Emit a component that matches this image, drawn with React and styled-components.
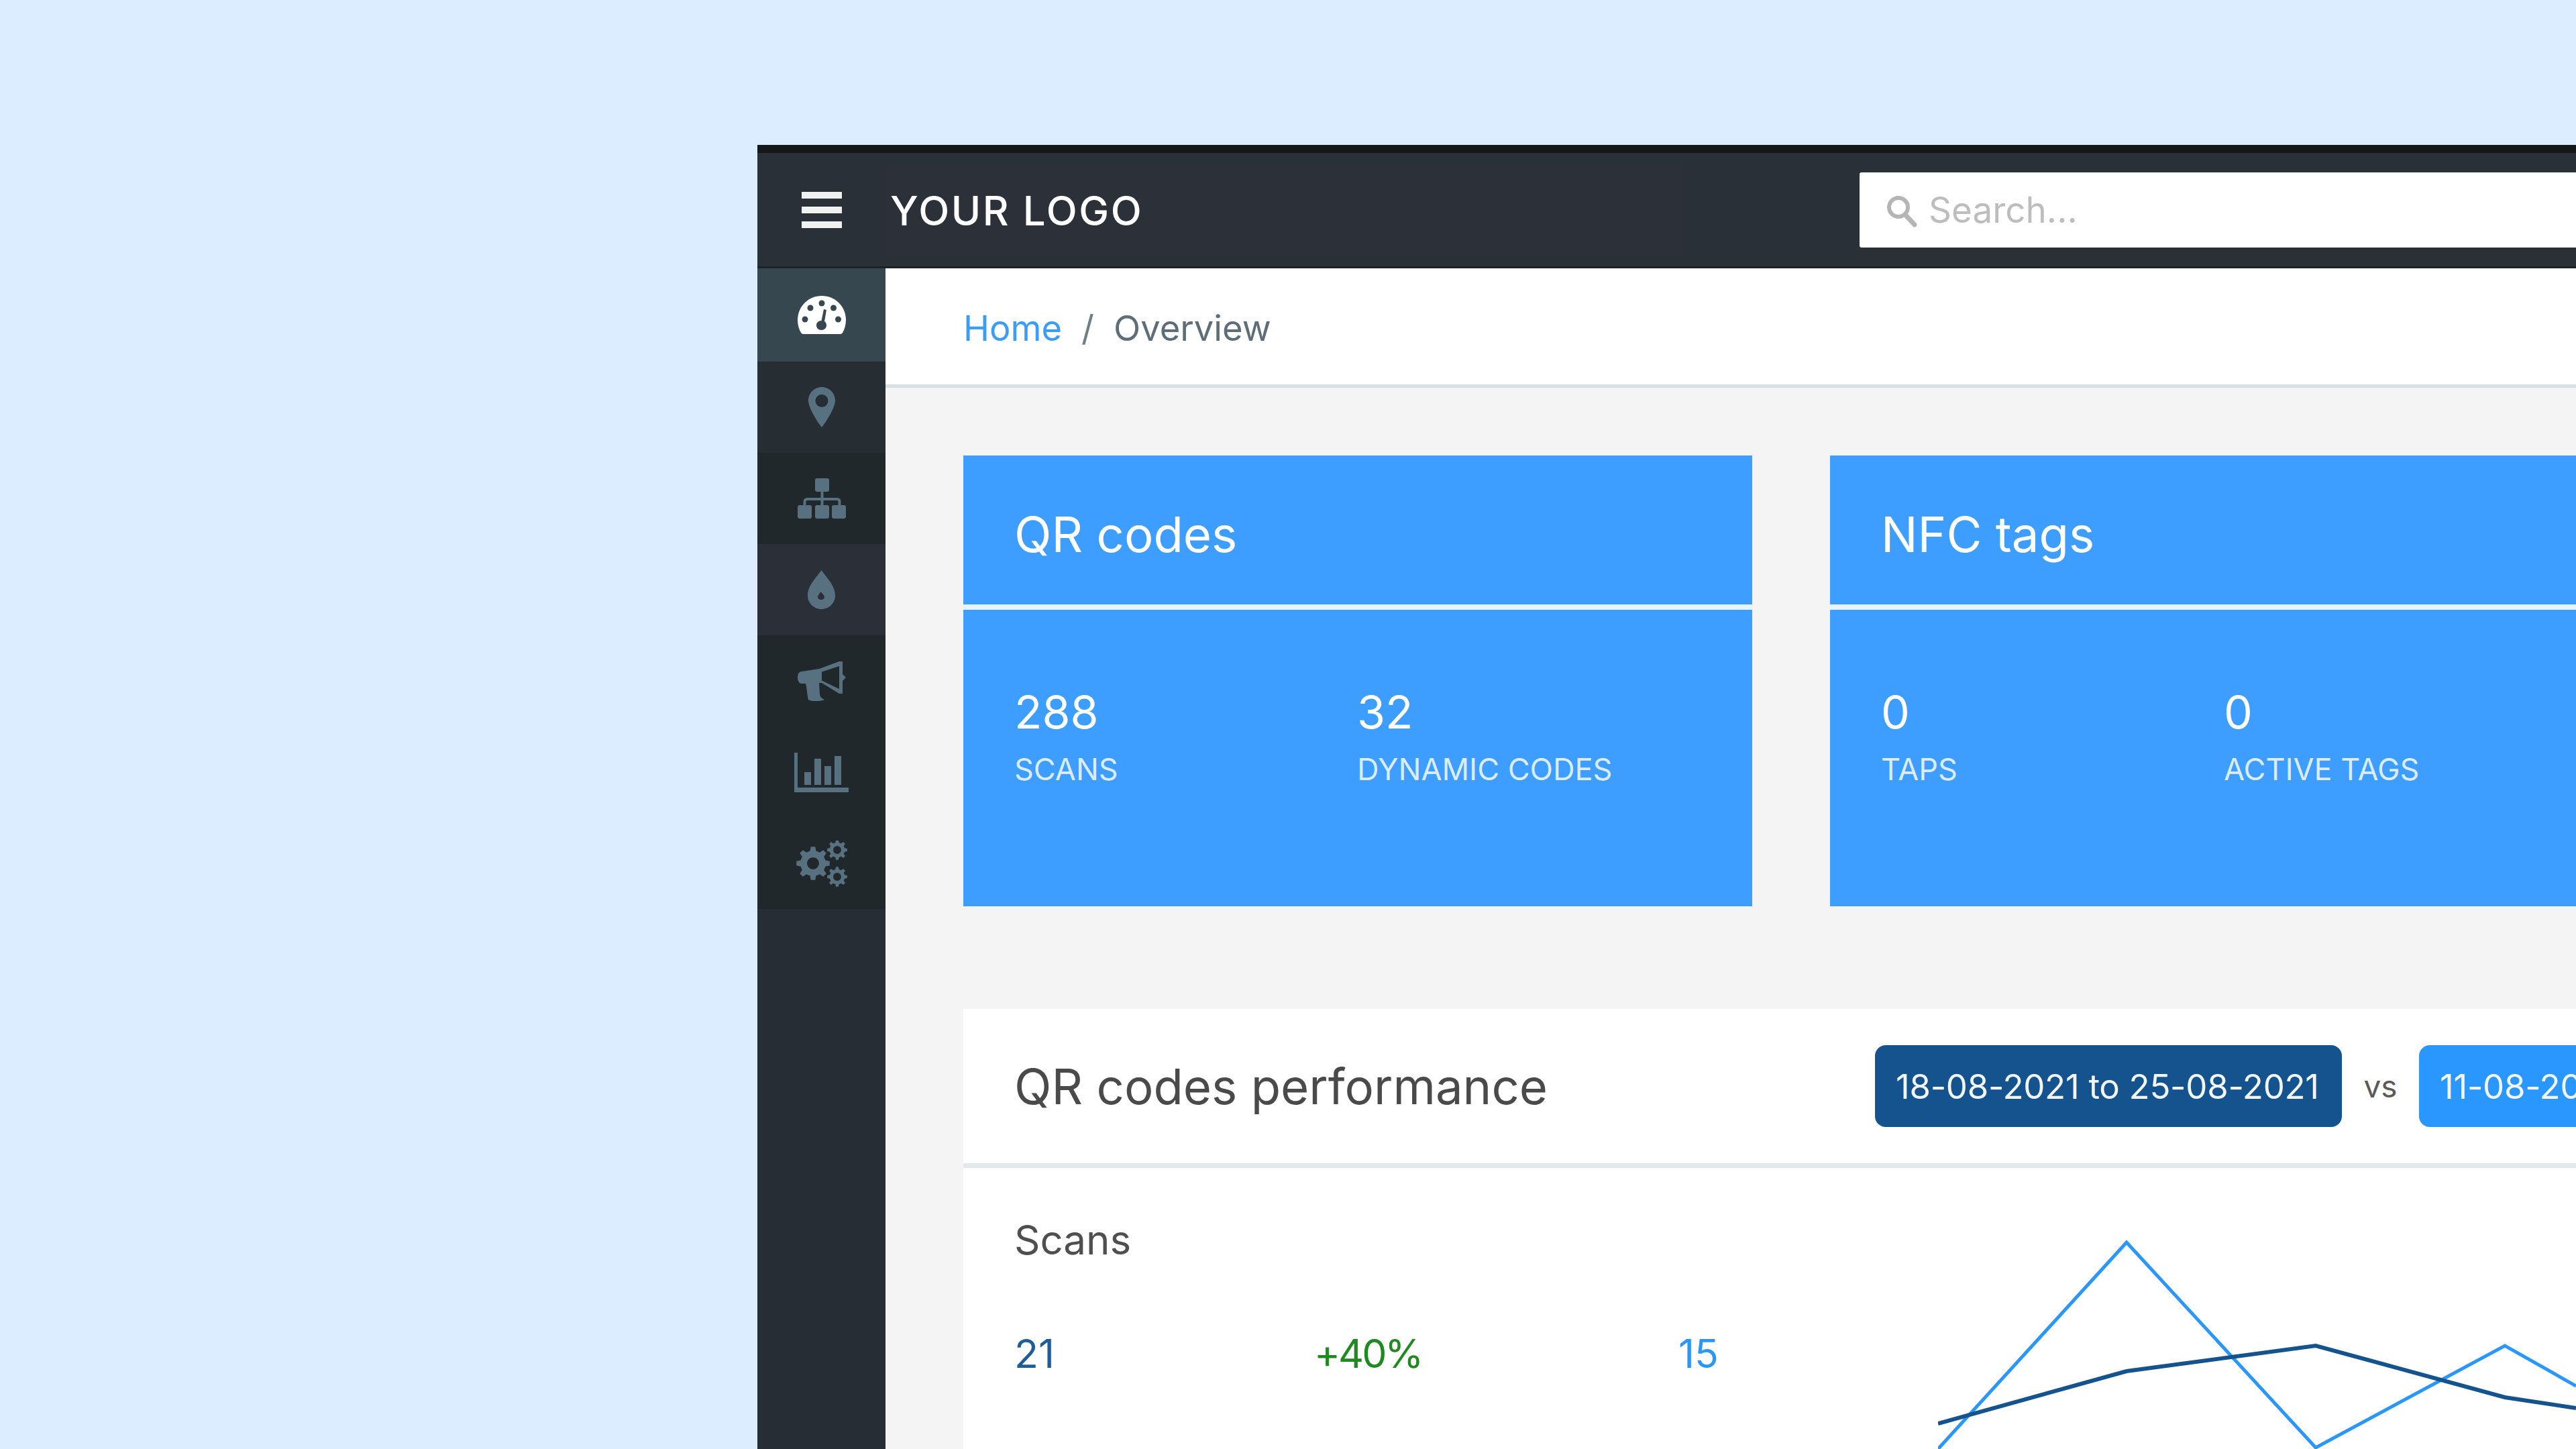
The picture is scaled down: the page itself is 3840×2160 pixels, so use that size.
import React from "react";
import styled, { createGlobalStyle } from "styled-components";

const Global = createGlobalStyle`
  html, body { margin: 0; padding: 0; width: 3840px; height: 2160px; overflow: hidden; background: #dbedff; }
  #root { width: 3840px; height: 2160px; overflow: hidden; }
  * { box-sizing: border-box; }
`;

const Stage = styled.div`
  width: 3840px;
  height: 2160px;
  padding: 216px 0 0 1129px;
  overflow: hidden;
  background: #dbedff;
  font-family: Inter, "Liberation Sans", sans-serif;
`;
const Window = styled.div`
  width: 2711px;
  height: 1944px;
  display: flex;
  flex-direction: column;
  background: #2a2f38;
  border-top: 12px solid #15181a;
  overflow: hidden;
`;
const Header = styled.header`
  height: 172px;
  flex: none;
  display: flex;
  align-items: center;
  background: #2a3038;
  border-bottom: 3px solid #1c2329;
`;
const Burger = styled.div`
  width: 191px;
  flex: none;
  display: flex;
  flex-direction: column;
  align-items: center;
  gap: 12px;
  span { display: block; width: 60px; height: 10px; background: #f0f1f1; }
`;
const LogoArea = styled.div`
  width: 1191px;
  flex: none;
  height: 134px;
  padding: 2px 0 0 7px;
  display: flex;
  align-items: center;
  background: #2c3039;
  color: #fff;
  font-size: 60px;
  font-weight: 500;
  letter-spacing: 2.6px;
`;
const SearchBox = styled.div`
  margin-left: 261px;
  flex: none;
  width: 1100px;
  height: 112px;
  background: #fff;
  border-radius: 3px 0 0 3px;
  display: flex;
  align-items: center;
  padding-left: 38px;
  gap: 15px;
  color: #bdbdbd;
  font-size: 53px;
  svg { flex: none; margin-top: 3px; }
`;
const Body = styled.div`
  flex: 1;
  display: flex;
  min-height: 0;
`;
const Sidebar = styled.nav`
  width: 191px;
  flex: none;
  background: #272d34;
`;
const toneColors = { active: "#37474f", mid: "#262e33", deep: "#20282b", soft: "#2a2f38" };
const NavItem = styled.div`
  height: ${p => (p.$tone === "active" ? 139 : 136)}px;
  display: flex;
  align-items: center;
  justify-content: center;
  color: ${p => (p.$tone === "active" ? "#fff" : "#577180")};
  background: ${p => toneColors[p.$tone]};
`;
const Main = styled.main`
  flex: 1;
  background: #f4f4f4;
  min-width: 0;
`;
const Crumbs = styled.div`
  height: 178px;
  padding: 5px 0 0 116px;
  display: flex;
  align-items: center;
  background: #fff;
  border-bottom: 5px solid #d6dfe4;
  font-size: 52.5px;
  color: #5e6e78;
`;
const CrumbLink = styled.span` color: #3a9dfb; `;
const Slash = styled.span` margin: 0 29px; color: #6f7f88; `;
const Content = styled.div`
  padding: 101px 0 0 116px;
`;
const Cards = styled.div`
  display: flex;
  gap: 116px;
`;
const StatCard = styled.section`
  width: 1176px;
  height: 672px;
  flex: none;
  background: #3d9eff;
  color: #fff;
`;
const StatHead = styled.h2`
  margin: 0;
  height: 230px;
  padding: 78px 0 0 76px;
  font-size: 72.5px;
  line-height: 80px;
  font-weight: 400;
  border-bottom: 8px solid #e8f3ff;
`;
const StatRow = styled.div`
  display: flex;
  padding: 114px 0 0 76px;
`;
const Stat = styled.div`
  width: 511px;
  font-size: 68px;
  line-height: 76px;
  font-weight: 400;
  small {
    display: block;
    margin-top: 22px;
    font-size: 45px;
    line-height: 52px;
    font-weight: 400;
    color: #dcecff;
  }
`;
const Perf = styled.section`
  margin-top: 153px;
  background: #fff;
  height: 800px;
`;
const PerfHead = styled.div`
  height: 237px;
  padding: 0 0 0 76px;
  display: flex;
  align-items: center;
  border-bottom: 7px solid #e3e8eb;
`;
const PerfTitle = styled.h3`
  margin: 0;
  width: 1283px;
  flex: none;
  font-size: 72.5px;
  font-weight: 400;
  color: #4a4a4a;
`;
const RangeBtn = styled.div`
  height: 122px;
  flex: none;
  width: 696px;
  padding-left: 31px;
  display: flex;
  align-items: center;
  white-space: nowrap;
  border-radius: 16px;
  background: ${p => (p.$light ? "#2a97ff" : "#15538e")};
  color: #f2f6fa;
  font-size: 51px;
  letter-spacing: -0.3px;
`;
const Vs = styled.span`
  width: 115px;
  flex: none;
  text-align: center;
  color: #5a5a5a;
  font-size: 46px;
`;
const PerfBody = styled.div`
  display: grid;
  grid-template-columns: 1377px 1fr;
  padding: 0 0 0 76px;
`;
const Metric = styled.div`
  padding-top: 72px;
`;
const MetricLabel = styled.div`
  font-size: 60px;
  line-height: 70px;
  color: #4f4f4f;
`;
const MetricRow = styled.div`
  margin-top: 100px;
  display: grid;
  grid-template-columns: 447px 543px 1fr;
  font-size: 59px;
  line-height: 70px;
`;
const Num = styled.span`
  color: ${p => p.$c};
  letter-spacing: ${p => (p.$tight ? "-3px" : "0")};
`;
const Chart = styled.svg`
  display: block;
  margin-top: 100px;
`;

const Gauge = () => (
  <svg width="72" height="57" viewBox="0 0 72 57">
    <path fill="currentColor" d="M36 0C16 0 0 16 0 36c0 7 2 14 5 19 1 1.500 2 2 4 2h54c2 0 3-.5 4-2 3-5 5-12 5-19C72 16 56 0 36 0Z" />
    <g fill="#37474f">
      <circle cx="36" cy="11" r="4.500" /><circle cx="19" cy="18" r="4.500" /><circle cx="53.500" cy="18" r="4.500" />
      <circle cx="11" cy="35" r="4.500" /><circle cx="60.500" cy="35" r="4.500" />
      <path d="M39 20 43 21 40 38c2 1 3 3.500 3 6 0 4-3 7-7.500 7S28 48 28 44c0-4 3-7 7.500-7Z" />
    </g>
  </svg>
);
const Pin = () => (
  <svg width="40" height="60" viewBox="0 0 40 60">
    <path fill="currentColor" fillRule="evenodd" d="M20 0C9 0 0 9 0 20c0 10 12 30 20 40 8-10 20-30 20-40C40 9 31 0 20 0Zm0 11a9.500 9.500 0 1 1 0 19 9.500 9.500 0 0 1 0-19Z" />
  </svg>
);
const SiteMap = () => (
  <svg width="72" height="60" viewBox="0 0 72 60">
    <g fill="currentColor">
      <rect x="26" y="0" width="21" height="20" rx="3" />
      <rect x="0" y="40" width="21" height="20" rx="3" />
      <rect x="26" y="40" width="21" height="20" rx="3" />
      <rect x="51" y="40" width="21" height="20" rx="3" />
    </g>
    <path fill="none" stroke="currentColor" strokeWidth="4" d="M36.500 20V40M10.500 40V35q0-4 4-4h44q4 0 4 4v5" />
  </svg>
);
const Drop = () => (
  <svg width="41" height="58" viewBox="0 0 41 58">
    <path fill="currentColor" fillRule="evenodd" d="M20.500 0C27 10 41 22 41 37.500 41 49 32 58 20.500 58S0 49 0 37.500C0 22 14 10 20.500 0Zm-1 32c-2 3-4.500 5.500-4.500 8 0 2.500 2.500 4 5 4s5-1.500 5-4c0-2.500-3-5-5.500-8Z" />
  </svg>
);
const Horn = () => (
  <svg width="72" height="59" viewBox="0 0 72 59">
    <path fill="currentColor" fillRule="evenodd" d="M6 15 32 11 62 0H67V19L72 24 67 29V48H62L36 32H32L33 48C33 53 36 55 40 57 34 60 20 60 16 57 14 50 14 40 12 33H6C2 33 0 29 0 24S2 15 6 15ZM36 15.500V28.500L62 41V7Z" />
  </svg>
);
const Bars = () => (
  <svg width="81" height="59" viewBox="0 0 81 59">
    <g fill="currentColor">
      <rect x="0" y="0" width="5" height="59" /><rect x="0" y="52" width="81" height="7" />
      <rect x="15" y="29" width="10" height="19" /><rect x="30" y="9" width="10" height="39" />
      <rect x="45" y="20" width="10" height="28" /><rect x="60" y="5" width="10" height="43" />
    </g>
  </svg>
);
const gearPath = (cx, cy, R, hole, teeth) => {
  const root = R * 0.76;
  const step = (2 * Math.PI) / teeth;
  const pts = [];
  for (let i = 0; i < teeth; i++) {
    const a = i * step;
    [[root, -0.3], [R, -0.17], [R, 0.17], [root, 0.3]].forEach(([r, o]) => {
      pts.push(`${(cx + r * Math.cos(a + o * step)).toFixed(2)} ${(cy + r * Math.sin(a + o * step)).toFixed(2)}`);
    });
  }
  return `M${pts.join("L")}ZM${cx - hole} ${cy}a${hole} ${hole} 0 1 0 ${hole * 2} 0a${hole} ${hole} 0 1 0 ${-hole * 2} 0Z`;
};
const Cogs = () => (
  <svg width="76" height="69" viewBox="0 0 76 69">
    <g fill="currentColor" fillRule="evenodd">
      <path d={gearPath(25, 34, 25, 9, 8)} />
      <path d={gearPath(61, 14, 15, 6, 8)} />
      <path d={gearPath(61, 54, 15, 6, 8)} />
    </g>
  </svg>
);
const SearchIcon = () => (
  <svg width="50" height="50" viewBox="0 0 50 50" fill="none" stroke="#b5b5b5">
    <circle cx="20" cy="20" r="14" strokeWidth="6" />
    <path d="M30 31 44 46" strokeWidth="7" strokeLinecap="round" />
  </svg>
);

const navItems = [
  { key: "gauge", icon: <Gauge />, tone: "active" },
  { key: "pin", icon: <Pin />, tone: "mid" },
  { key: "map", icon: <SiteMap />, tone: "deep" },
  { key: "drop", icon: <Drop />, tone: "soft" },
  { key: "horn", icon: <Horn />, tone: "deep" },
  { key: "bars", icon: <Bars />, tone: "deep" },
  { key: "cogs", icon: <Cogs />, tone: "deep" },
];

const cards = [
  { title: "QR codes", a: ["288", "SCANS"], b: ["32", "DYNAMIC CODES"] },
  { title: "NFC tags", a: ["0", "TAPS"], b: ["0", "ACTIVE TAGS"] },
];

export default function App() {
  return (
    <Stage>
      <Global />
      <Window>
        <Header>
          <Burger><span /><span /><span /></Burger>
          <LogoArea>YOUR LOGO</LogoArea>
          <SearchBox><SearchIcon />Search...</SearchBox>
        </Header>
        <Body>
          <Sidebar>
            {navItems.map(n => (
              <NavItem key={n.key} $tone={n.tone}>{n.icon}</NavItem>
            ))}
          </Sidebar>
          <Main>
            <Crumbs>
              <CrumbLink>Home</CrumbLink><Slash>/</Slash>Overview
            </Crumbs>
            <Content>
              <Cards>
                {cards.map(c => (
                  <StatCard key={c.title}>
                    <StatHead>{c.title}</StatHead>
                    <StatRow>
                      <Stat>{c.a[0]}<small>{c.a[1]}</small></Stat>
                      <Stat>{c.b[0]}<small>{c.b[1]}</small></Stat>
                    </StatRow>
                  </StatCard>
                ))}
              </Cards>
              <Perf>
                <PerfHead>
                  <PerfTitle>QR codes performance</PerfTitle>
                  <RangeBtn>18-08-2021 to 25-08-2021</RangeBtn>
                  <Vs>vs</Vs>
                  <RangeBtn $light>11-08-2021 to 18-08-2021</RangeBtn>
                </PerfHead>
                <PerfBody>
                  <Metric>
                    <MetricLabel>Scans</MetricLabel>
                    <MetricRow>
                      <Num $c="#1f5d99">21</Num>
                      <Num $c="#1f8a1f" $tight>+40%</Num>
                      <Num $c="#2a97ff">15</Num>
                    </MetricRow>
                  </Metric>
                  <Chart width="960" height="330" viewBox="0 0 960 330" fill="none">
                    <polyline points="0,319 281,11 563,317 845,165 951,225" stroke="#2a97ff" strokeWidth="5" />
                    <polyline points="0,281 281,203 563,165 845,242 951,258" stroke="#15538e" strokeWidth="6" />
                  </Chart>
                </PerfBody>
              </Perf>
            </Content>
          </Main>
        </Body>
      </Window>
    </Stage>
  );
}
